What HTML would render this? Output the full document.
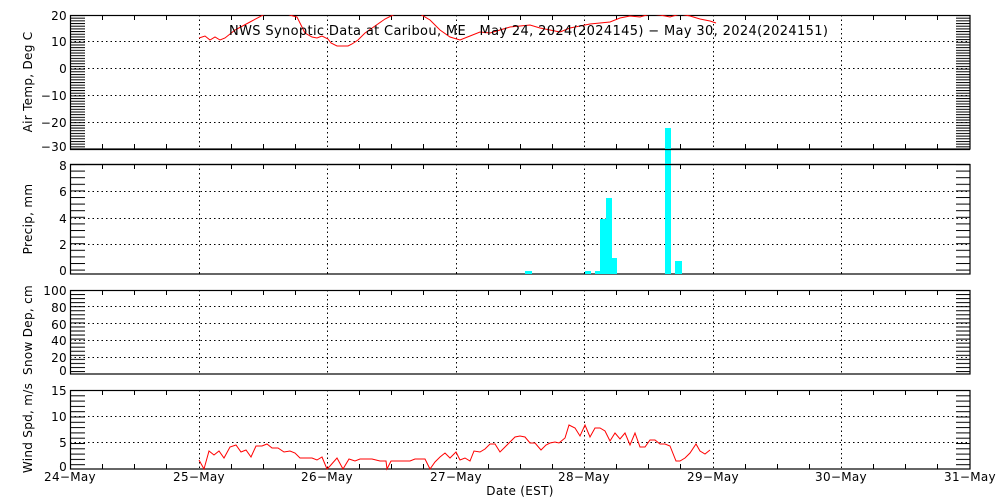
<!DOCTYPE html>
<html><head><style>
html,body{margin:0;padding:0;background:#fff;}
svg{display:block;}
text{font-family:"DejaVu Sans","Liberation Sans",sans-serif;font-size:12px;fill:#000;letter-spacing:0.3px;}
</style></head><body>
<svg width="1000" height="500" viewBox="0 0 1000 500" xmlns="http://www.w3.org/2000/svg">
<defs>
<pattern id="t1" x="0" y="15" width="20" height="2.68" patternUnits="userSpaceOnUse"><rect x="0" y="0" width="20" height="1" fill="#000"/></pattern>
<pattern id="t2" x="0" y="164" width="20" height="6.6" patternUnits="userSpaceOnUse"><rect x="0" y="0" width="20" height="1" fill="#000"/></pattern>
<pattern id="t3" x="0" y="290" width="20" height="4.05" patternUnits="userSpaceOnUse"><rect x="0" y="0" width="20" height="1" fill="#000"/></pattern>
<pattern id="t4" x="0" y="390" width="20" height="5.3" patternUnits="userSpaceOnUse"><rect x="0" y="0" width="20" height="1" fill="#000"/></pattern>
<clipPath id="c1"><rect x="70" y="15" width="900" height="134"/></clipPath>
</defs>
<g fill="none" stroke="#000">
<rect x="71" y="15" width="14" height="134" fill="url(#t1)" stroke="none"/>
<rect x="956" y="15" width="14" height="134" fill="url(#t1)" stroke="none"/>
<rect x="71" y="164" width="14" height="110" fill="url(#t2)" stroke="none"/>
<rect x="956" y="164" width="14" height="110" fill="url(#t2)" stroke="none"/>
<rect x="71" y="290" width="14" height="84" fill="url(#t3)" stroke="none"/>
<rect x="956" y="290" width="14" height="84" fill="url(#t3)" stroke="none"/>
<rect x="71" y="390" width="14" height="79" fill="url(#t4)" stroke="none"/>
<rect x="956" y="390" width="14" height="79" fill="url(#t4)" stroke="none"/>
<g stroke-dasharray="1.5,3" stroke-width="1">
<path d="M199.5,15V149M327.5,15V149M456.5,15V149M584.5,15V149M713.5,15V149M841.5,15V149"/>
<path d="M199.5,164V274M327.5,164V274M456.5,164V274M584.5,164V274M713.5,164V274M841.5,164V274"/>
<path d="M199.5,290V374M327.5,290V374M456.5,290V374M584.5,290V374M713.5,290V374M841.5,290V374"/>
<path d="M199.5,390V469M327.5,390V469M456.5,390V469M584.5,390V469M713.5,390V469M841.5,390V469"/>
<path d="M70,41.5H970M70,68.5H970M70,95.5H970M70,122.5H970"/>
<path d="M70,191.5H970M70,218.5H970M70,244.5H970"/>
<path d="M70,306.5H970M70,323.5H970M70,340.5H970M70,357.5H970"/>
<path d="M70,416.5H970M70,442.5H970"/>
</g>
<rect x="70.5" y="15.5" width="899.5" height="133.5" stroke-width="1.2"/>
<rect x="70.5" y="164.5" width="899.5" height="109.5" stroke-width="1.2"/>
<rect x="70.5" y="290.5" width="899.5" height="83.5" stroke-width="1.2"/>
<rect x="70.5" y="390.5" width="899.5" height="78.5" stroke-width="1.2"/>
<g stroke-width="1">
<path d="M102.5,15v5M134.5,15v5M166.5,15v5M231.5,15v5M263.5,15v5M295.5,15v5M359.5,15v5M391.5,15v5M423.5,15v5M488.5,15v5M520.5,15v5M552.5,15v5M616.5,15v5M648.5,15v5M680.5,15v5M745.5,15v5M777.5,15v5M809.5,15v5M873.5,15v5M905.5,15v5M937.5,15v5"/>
<path d="M102.5,149v-5M134.5,149v-5M166.5,149v-5M231.5,149v-5M263.5,149v-5M295.5,149v-5M359.5,149v-5M391.5,149v-5M423.5,149v-5M488.5,149v-5M520.5,149v-5M552.5,149v-5M616.5,149v-5M648.5,149v-5M680.5,149v-5M745.5,149v-5M777.5,149v-5M809.5,149v-5M873.5,149v-5M905.5,149v-5M937.5,149v-5"/>
<path d="M102.5,164v5M134.5,164v5M166.5,164v5M231.5,164v5M263.5,164v5M295.5,164v5M359.5,164v5M391.5,164v5M423.5,164v5M488.5,164v5M520.5,164v5M552.5,164v5M616.5,164v5M648.5,164v5M680.5,164v5M745.5,164v5M777.5,164v5M809.5,164v5M873.5,164v5M905.5,164v5M937.5,164v5"/>
<path d="M102.5,290v5M134.5,290v5M166.5,290v5M231.5,290v5M263.5,290v5M295.5,290v5M359.5,290v5M391.5,290v5M423.5,290v5M488.5,290v5M520.5,290v5M552.5,290v5M616.5,290v5M648.5,290v5M680.5,290v5M745.5,290v5M777.5,290v5M809.5,290v5M873.5,290v5M905.5,290v5M937.5,290v5"/>
<path d="M102.5,390v5M134.5,390v5M166.5,390v5M231.5,390v5M263.5,390v5M295.5,390v5M359.5,390v5M391.5,390v5M423.5,390v5M488.5,390v5M520.5,390v5M552.5,390v5M616.5,390v5M648.5,390v5M680.5,390v5M745.5,390v5M777.5,390v5M809.5,390v5M873.5,390v5M905.5,390v5M937.5,390v5"/>
<path d="M102.5,469v-5M134.5,469v-5M166.5,469v-5M231.5,469v-5M263.5,469v-5M295.5,469v-5M359.5,469v-5M391.5,469v-5M423.5,469v-5M488.5,469v-5M520.5,469v-5M552.5,469v-5M616.5,469v-5M648.5,469v-5M680.5,469v-5M745.5,469v-5M777.5,469v-5M809.5,469v-5M873.5,469v-5M905.5,469v-5M937.5,469v-5"/>
</g>
</g>
<g fill="#00ffff">
<rect x="525" y="271" width="7" height="3"/>
<rect x="585" y="271" width="6" height="3"/>
<rect x="595" y="271" width="5" height="3"/>
<rect x="600" y="219" width="6" height="55"/>
<rect x="606" y="198" width="6" height="76"/>
<rect x="612" y="258" width="5" height="16"/>
<rect x="665" y="128" width="6" height="146"/>
<rect x="675" y="261" width="7" height="13"/>
</g>
<path d="M70,149.5H970M70,164.5H970" stroke="#000" stroke-width="1.2"/>
<polyline clip-path="url(#c1)" fill="none" stroke="#f00" stroke-width="1" points="199,38 205,36 210,40 215,37 220,40 225,38 235,30 250,22 265,14 287,14 293,16 297,17 305,33 312,37 317,38 322,36 328,39 331,43 337,46 348,46 352,44 358,40 365,33 375,26 385,19 395,14 420,14 430,20 440,30 450,37 460,40 470,36 480,32 490,33 500,30 510,27 520,26 530,25 540,28 550,30 560,32 570,28 580,26 590,24 600,23 610,22 620,18 630,16 640,17 650,14 660,15 670,17 680,14 690,16 700,19 710,21 716,23"/>
<polyline fill="none" stroke="#f00" stroke-width="1" points="199,460 204,469 209,451 214,455 219,451 224,458 230,447 236,445 241,452 246,450 251,457 256,446 262,446 267,444 272,448 278,448 284,452 290,451 295,453 300,458 312,458 317,460 322,457 327,469 330,466 337,458 343,469 349,459 355,461 360,459 372,459 380,461 386,461 387,469 391,461 410,461 415,459 425,459 430,469 435,462 440,457 445,453 450,458 456,452 460,460 465,458 470,461 474,451 480,452 485,449 490,444 495,444 500,452 505,447 510,442 515,437 520,436 525,437 530,443 535,443 541,450 546,445 550,443 555,442 559,443 565,438 569,425 575,428 580,436 585,425 590,437 595,428 600,428 605,431 610,441 615,433 620,439 625,433 630,445 635,433 640,447 645,447 650,440 655,440 660,444 665,444 670,446 676,461 680,461 685,458 690,453 696,444 700,451 705,454 710,450"/>
<g text-anchor="end">
<text x="67" y="20">20</text><text x="67" y="46">10</text><text x="67" y="73">0</text><text x="67" y="100">−10</text><text x="67" y="127">−20</text><text x="67" y="151">−30</text>
<text x="67" y="170">8</text><text x="67" y="196">6</text><text x="67" y="223">4</text><text x="67" y="249">2</text><text x="67" y="275">0</text>
<text x="67" y="295">100</text><text x="67" y="312">80</text><text x="67" y="329">60</text><text x="67" y="345">40</text><text x="67" y="362">20</text><text x="67" y="375">0</text>
<text x="67" y="395">15</text><text x="67" y="421">10</text><text x="67" y="447">5</text><text x="67" y="471">0</text>
</g>
<g style="letter-spacing:0.5px">
<text transform="translate(32,82) rotate(-90)" text-anchor="middle">Air Temp, Deg C</text>
<text transform="translate(32,219) rotate(-90)" text-anchor="middle">Precip, mm</text>
<text transform="translate(32,330) rotate(-90)" text-anchor="middle">Snow Dep, cm</text>
<text transform="translate(32,428) rotate(-90)" text-anchor="middle">Wind Spd, m/s</text>
</g>
<g text-anchor="middle">
<text x="70" y="481">24−May</text><text x="199" y="481">25−May</text><text x="327" y="481">26−May</text><text x="456" y="481">27−May</text><text x="584" y="481">28−May</text><text x="713" y="481">29−May</text><text x="841" y="481">30−May</text><text x="970" y="481">31−May</text>
<text x="520" y="495">Date (EST)</text>
</g>
<text x="229" y="35" style="font-size:13px;letter-spacing:0.35px" xml:space="preserve">NWS Synoptic Data at Caribou, ME   May 24, 2024(2024145) − May 30, 2024(2024151)</text>
</svg>
</body></html>
